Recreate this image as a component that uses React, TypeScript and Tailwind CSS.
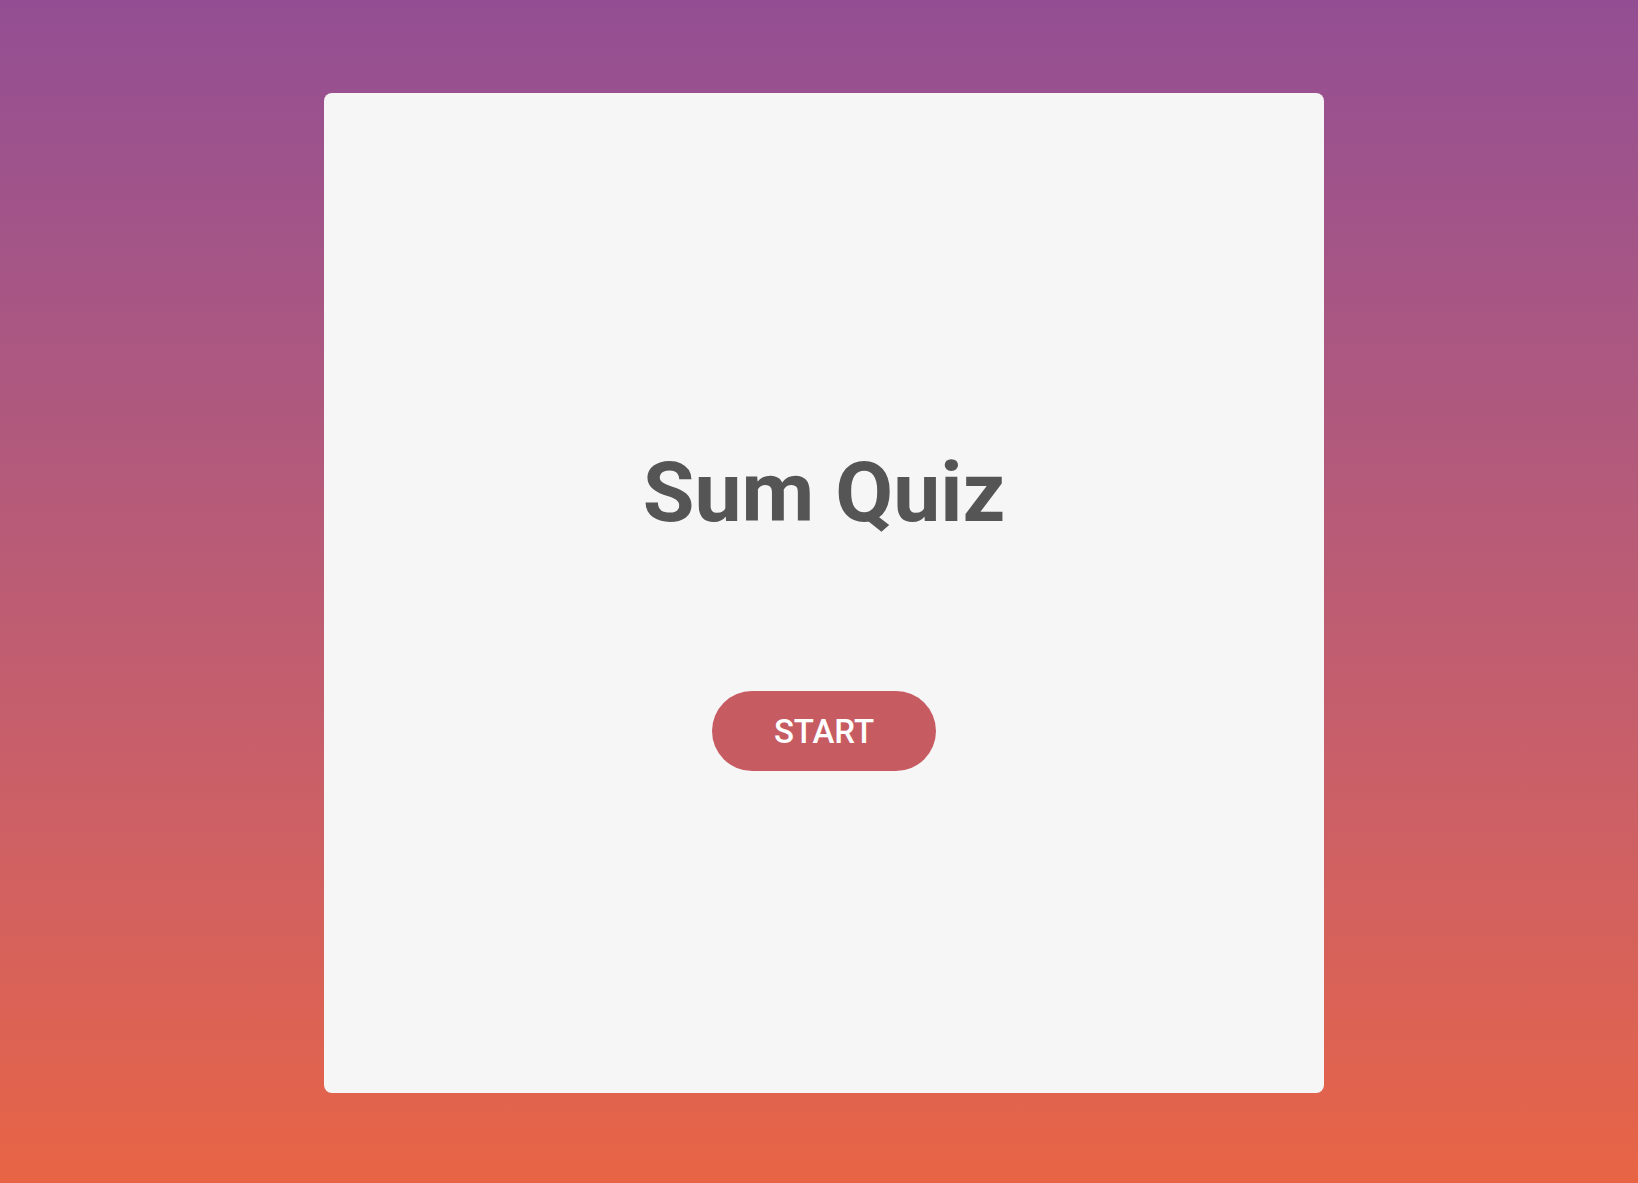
export default function App() {
  return (
    <div className="min-h-screen w-full bg-gradient-to-b from-[#934e93] to-[#e86444] flex justify-center pt-[93px] pl-[10px]">
      <div className="w-[1000px] h-[1000px] bg-[#f6f6f6] rounded-lg flex flex-col items-center pt-[358px]">
        <h1 className="font-['Roboto',sans-serif] font-bold text-[84px] leading-none text-[#555555]">
          Sum Quiz
        </h1>
        <button className="mt-[156px] w-[224px] h-[80px] rounded-full bg-[#c75b62] text-white font-['Roboto',sans-serif] font-medium text-[33px] leading-none">
          START
        </button>
      </div>
    </div>
  );
}
